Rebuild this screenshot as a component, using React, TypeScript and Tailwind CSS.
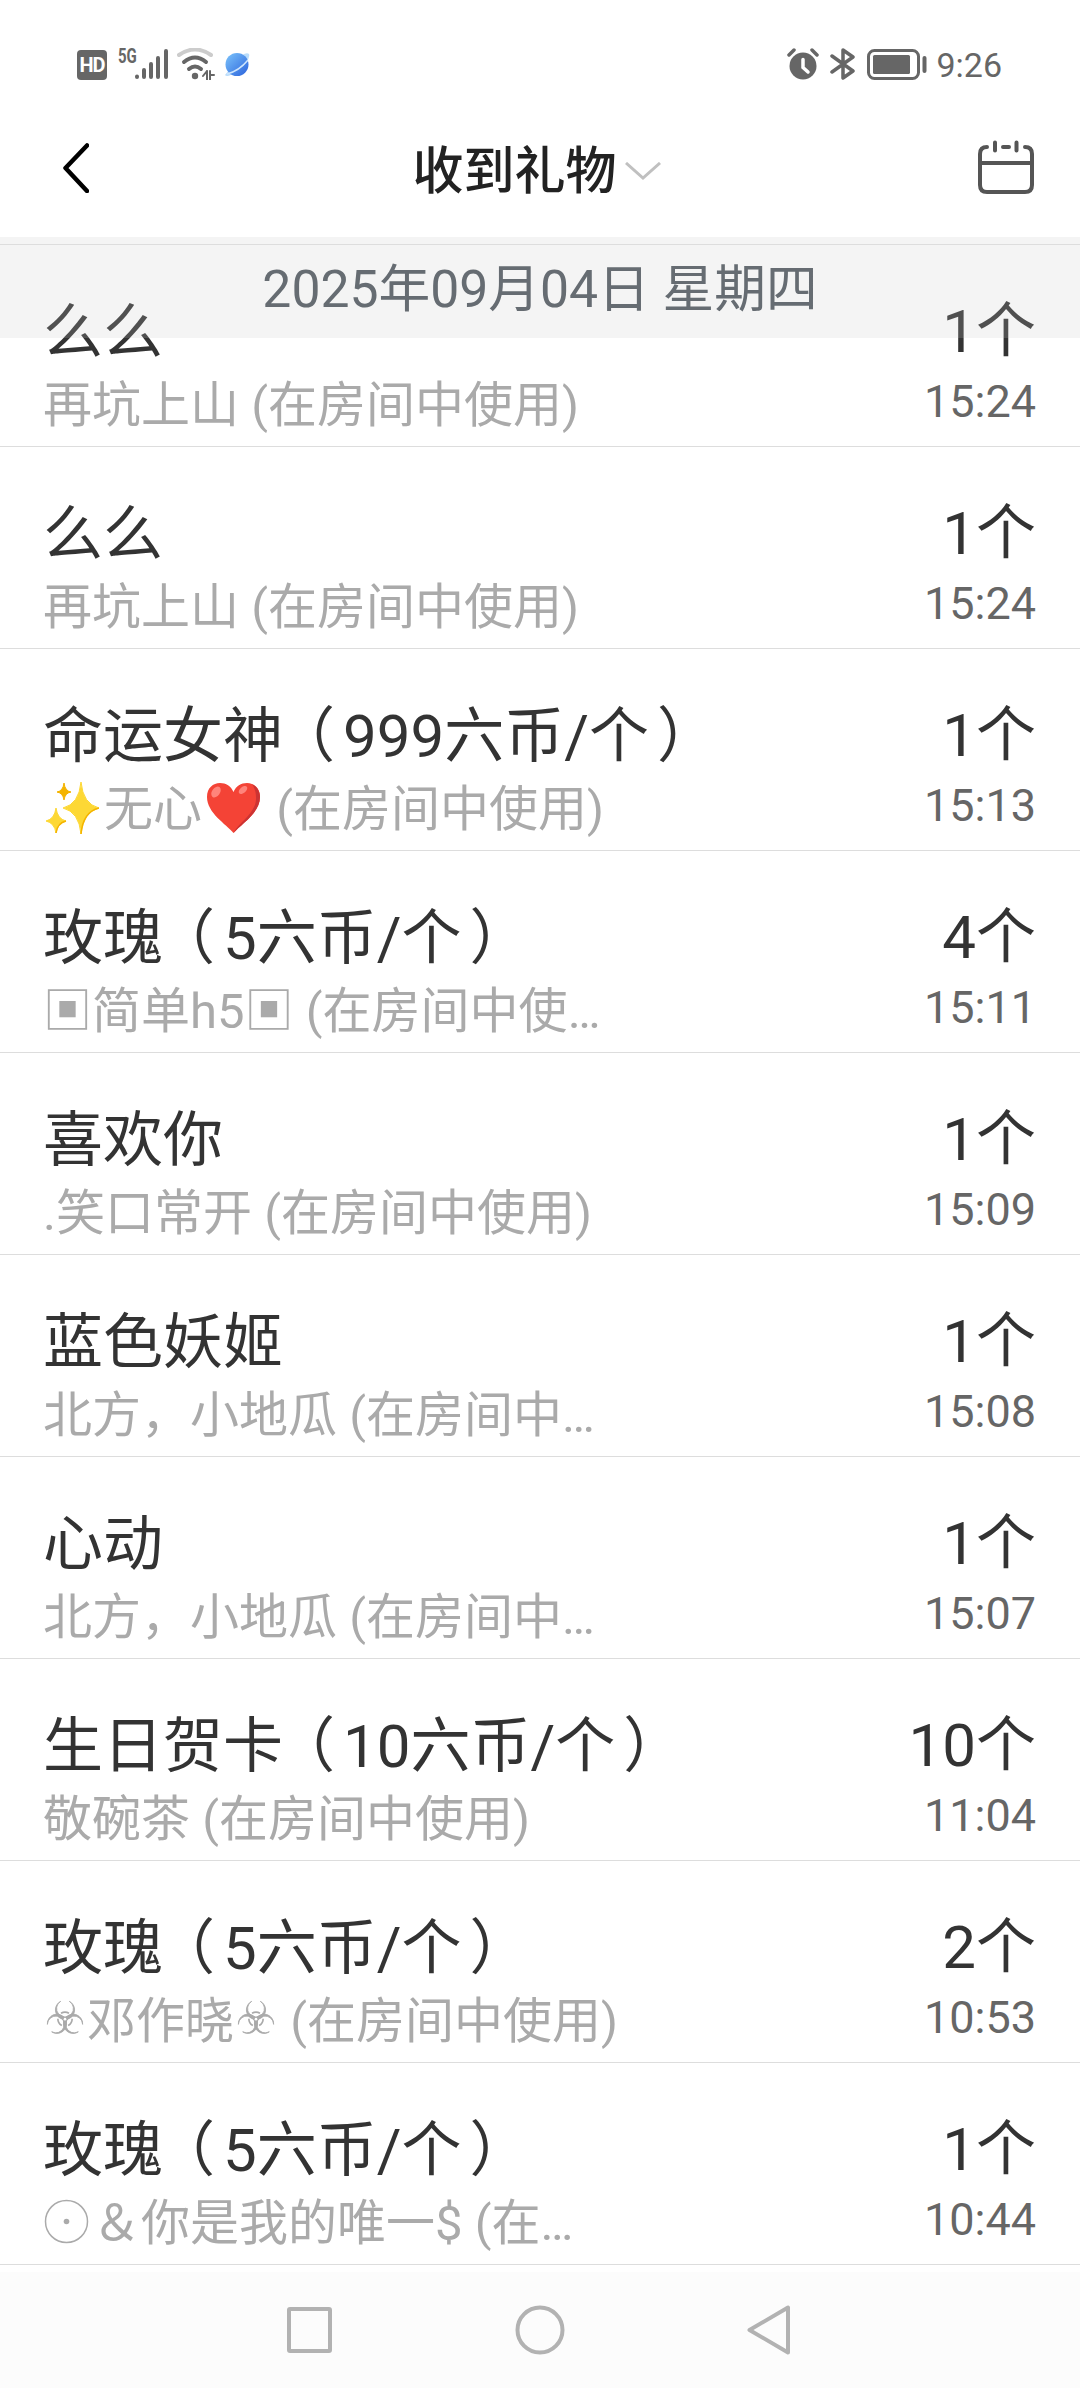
import clsx from "clsx";

interface Gift {
  name: string;
  price?: string;
  sender: string;
  count: string;
  time: string;
}

const gifts: Gift[] = [
  { name: "么么", sender: "再坑上山 (在房间中使用)", count: "1个", time: "15:24" },
  { name: "么么", sender: "再坑上山 (在房间中使用)", count: "1个", time: "15:24" },
  { name: "命运女神", price: "999六币/个", sender: "✨无心❤ (在房间中使用)", count: "1个", time: "15:13" },
  { name: "玫瑰", price: "5六币/个", sender: "▣简单h5▣ (在房间中使…", count: "4个", time: "15:11" },
  { name: "喜欢你", sender: ".笑口常开 (在房间中使用)", count: "1个", time: "15:09" },
  { name: "蓝色妖姬", sender: "北方，小地瓜 (在房间中…", count: "1个", time: "15:08" },
  { name: "心动", sender: "北方，小地瓜 (在房间中…", count: "1个", time: "15:07" },
  { name: "生日贺卡", price: "10六币/个", sender: "敬碗茶 (在房间中使用)", count: "10个", time: "11:04" },
  { name: "玫瑰", price: "5六币/个", sender: "☣邓作晓☣ (在房间中使用)", count: "2个", time: "10:53" },
  { name: "玫瑰", price: "5六币/个", sender: "⊙＆你是我的唯一$ (在…", count: "1个", time: "10:44" },
];

const Sparkles = () => (
  <svg className="inline-block w-[54px] h-[52px] ml-[2px] mr-[5px] -mt-[10px]" viewBox="0 0 54 52">
    <g fill="#fdd835">
      <path d="M36 0 Q38 22 54 26 Q38 30 36 52 Q34 30 18 26 Q34 22 36 0Z" stroke="#fdd835" strokeLinejoin="round" />
      <path d="M11 26 Q12.500 37 21 39 Q12.500 41 11 51 Q9.500 41 1 39 Q9.500 37 11 26Z" stroke="#fdd835" />
    </g>
    <path fill="none" stroke="#f4b400" strokeWidth="1.500" d="M54 26 Q38 30 36 52M21 39 Q12.500 41 11 51" />
    <path fill="#f4b400" stroke="#f4b400" d="M19 1 Q20 9 26 10 Q20 11 19 18 Q18 11 12 10 Q18 9 19 1Z" />
  </svg>
);

const Heart = () => (
  <svg className="inline-block w-[55px] h-[52px] ml-[4px] mr-[3px] -mt-[10px]" viewBox="0 0 55 52">
    <path
      fill="#f44336"
      d="M27.500 51 C20 42 1 31 1 15 C1 6 7 1 14 1 C20 1 25 4 27.500 10 C30 4 35 1 41 1 C48 1 54 6 54 15 C54 31 35 42 27.500 51Z"
    />
    <path fill="#c33" d="M46 2 C51 5 54 9 54 15 C54 31 35 42 27.500 51 C33 40 51 31 50 15 C50 9 48 5 46 2Z" />
    <ellipse cx="10" cy="10" rx="4" ry="6" fill="#ff847b" transform="rotate(35 10 10)" />
    <ellipse cx="37" cy="8" rx="3" ry="5" fill="#ff847b" transform="rotate(50 37 8)" />
  </svg>
);

const Biohazard = () => (
  <svg className="inline-block w-[40px] h-[37px] ml-[2px] mr-[2px] -mt-[13px]" viewBox="45 60 120 112" fill="#aaa">
    {[0, 120, 240].map((angle) => (
      <g key={angle} transform={`rotate(${angle} 105 118)`} stroke="#aaa">
        <path d="M92 64 A29 29 0 1 0 118 64 A25.500 25.500 0 1 1 92 64Z" strokeWidth="2.500" />
        <path d="M93 100 Q105 93 117 100" fill="none" strokeWidth="5" />
        <path d="M105 115 V134" strokeWidth="8" />
      </g>
    ))}
    <circle cx="105" cy="118" r="4" fill="#fff" />
  </svg>
);

const CircledDot = () => (
  <svg className="inline-block w-[45px] h-[45px] ml-px mr-[3px] -mt-[11px]" viewBox="0 0 45 45">
    <circle cx="22.500" cy="22.500" r="21" fill="none" stroke="#aaa" strokeWidth="1.500" />
    <circle cx="22.500" cy="22.500" r="2.800" fill="#aaa" />
  </svg>
);

const renderSender = (sender: string) =>
  Array.from(sender).map((char, index) => {
    if (char === "✨") return <Sparkles key={index} />;
    if (char === "❤") return <Heart key={index} />;
    if (char === "☣") return <Biohazard key={index} />;
    if (char === "⊙") return <CircledDot key={index} />;
    return char;
  });

const StatusBar = () => (
  <div className="h-[120px] flex items-start justify-between pl-[77px] pr-[78px] text-[#666]">
    <div className="flex h-8 mt-12">
      <div className="w-[30px] h-[30px] mt-[2px] rounded-[4px] bg-[#666] text-white text-[20px] leading-[30px] font-bold text-center tracking-tighter">
        HD
      </div>
      <span className="ml-[11px] w-[17px] text-[20px] leading-[16px] font-bold origin-left scale-x-75">5G</span>
      <svg className="w-[34px] h-8" viewBox="0 0 34 32" stroke="#666" strokeWidth="4" strokeLinecap="round">
        <path d="M2 29v-.5M9 29v-7M16 29v-13M23 29V10M31 29V3" />
      </svg>
      <svg className="w-[40px] h-8 ml-[8px]" viewBox="0 0 40 32" fill="none" strokeWidth="4" strokeLinecap="round">
        <path d="M2 7 Q18 -4 34 7" stroke="#ccc" />
        <path d="M7 14 Q18 5 29 14M12 21 Q18 16 24 21" stroke="#666" />
        <circle cx="18" cy="28" r="3.200" fill="#666" />
        <path d="M30 23v9M26 28l4-5M33 23v9M33 27h4" stroke="#666" strokeWidth="2" />
      </svg>
      <svg className="w-[26px] h-[26px] mt-1 ml-[7px]" viewBox="0 0 26 26">
        <defs>
          <linearGradient id="planet" x1="0" y1="0" x2="1" y2="1">
            <stop offset="0" stopColor="#7cc4fb" />
            <stop offset="1" stopColor="#2a62dc" />
          </linearGradient>
        </defs>
        <path d="M1 23 Q3 26 12 20 Q27 8 25 2 Q23 0 18 3Z" fill="#b9dcfb" />
        <circle cx="13" cy="12.500" r="11.500" fill="url(#planet)" />
        <path d="M3 22 Q15 19 24 8" fill="none" stroke="#cfe6fd" strokeWidth="1.500" />
      </svg>
    </div>

    <div className="flex h-8 mt-12">
      <svg className="w-[32px] h-8" viewBox="0 0 32 32" fill="none" strokeLinecap="round">
        <circle cx="16" cy="18" r="13.500" fill="#666" />
        <path d="M2 7l5-5M30 7l-5-5" stroke="#666" strokeWidth="3.500" />
        <path d="M16 11.500v8l5 4.500" stroke="#fff" strokeWidth="3.500" />
      </svg>
      <svg
        className="w-[26px] h-8 ml-[11px]"
        viewBox="0 0 26 32"
        fill="none"
        stroke="#666"
        strokeWidth="3.500"
        strokeLinejoin="round"
        strokeLinecap="round"
      >
        <path d="M2 8 L23 23 L13 30 V2 L23 9 L2 24" />
      </svg>
      <svg className="w-[60px] h-8 ml-[11px]" viewBox="0 0 60 32">
        <rect x="1.500" y="2.500" width="50" height="28" rx="6" fill="none" stroke="#666" strokeWidth="3" />
        <rect x="6" y="7" width="37" height="19" rx="1.500" fill="#666" />
        <path d="M57.500 10v13" stroke="#666" strokeWidth="4" strokeLinecap="round" />
      </svg>
      <span className="ml-[9px] text-[34px] leading-[34px]">9:26</span>
    </div>
  </div>
);

const Header = () => (
  <div className="h-[117px] flex justify-between pl-[63px] pr-[46px]">
    <svg
      className="w-[26px] h-[50px] mt-[23px] mr-[6px]"
      viewBox="0 0 26 50"
      fill="none"
      stroke="#000"
      strokeWidth="4.500"
      strokeLinecap="round"
      strokeLinejoin="round"
    >
      <path d="M24 2.500 L2.500 25 L24 48" />
    </svg>
    <div className="flex">
      <h1 className="text-[51px] leading-[60px] mt-[22px] font-medium text-[#222]">收到礼物</h1>
      <svg className="w-9 h-[18px] mt-[42px] ml-[8px]" viewBox="0 0 36 18" fill="none" stroke="#c0c0c0" strokeWidth="3">
        <path d="M1 1 L18 16 L35 1" />
      </svg>
    </div>
    <svg
      className="w-[56px] h-[54px] mt-[20px]"
      viewBox="0 0 56 54"
      fill="none"
      stroke="#555"
      strokeWidth="4"
      strokeLinecap="round"
    >
      <path d="M9 7 Q2 7 2 14 V45 Q2 52 9 52 H47 Q54 52 54 45 V14 Q54 7 47 7M25 7h6M2 23H54" />
      <path d="M17 2.500v8M38.500 2.500v8" />
    </svg>
  </div>
);

const GiftRow = ({ gift, first }: { gift: Gift; first: boolean }) => (
  <div
    className={clsx(
      "h-[202px] flex justify-between pl-[43px] pr-11 border-b border-[#ddd] whitespace-nowrap",
      first && "mt-[-93px]"
    )}
  >
    <div className="pt-[52px]">
      <div className="text-[60px] leading-[72px] text-[#333]">
        {gift.name}
        {gift.price && (
          <>
            <span className="ml-[22px] mr-2 [font-feature-settings:'halt']">（</span>
            {gift.price}
            <span className="ml-2 [font-feature-settings:'halt']">）</span>
          </>
        )}
      </div>
      <div className="mt-1 h-[66px] text-[49px] leading-[66px] text-[#aaa]">{renderSender(gift.sender)}</div>
    </div>
    <div className="pt-[51px] text-right">
      <div className="text-[60px] leading-[72px] text-[#333]">{gift.count}</div>
      <div className="mt-px text-[45px] leading-[66px] text-[#666]">{gift.time}</div>
    </div>
  </div>
);

const NavBar = () => (
  <div className="h-[116px] mt-[7px] bg-[#fcfcfc]">
    <div className="flex pt-[33px] pl-[285px]">
      <svg className="w-[50px] h-[50px]" viewBox="0 0 50 50" fill="none" stroke="#b2b2b2" strokeWidth="4">
        <rect x="4" y="4" width="41" height="42" rx="1" />
      </svg>
      <svg className="w-[50px] h-[50px] ml-[180px]" viewBox="0 0 50 50" fill="none" stroke="#b2b2b2" strokeWidth="4">
        <circle cx="25" cy="25" r="22.500" />
      </svg>
      <svg
        className="w-[44px] h-[50px] ml-[182px]"
        viewBox="0 0 44 50"
        fill="none"
        stroke="#b2b2b2"
        strokeWidth="4"
        strokeLinejoin="round"
      >
        <path d="M2.500 25 L41 2.500 V47.500Z" />
      </svg>
    </div>
  </div>
);

export default function App() {
  return (
    <div className="w-[1080px] h-[2388px] overflow-hidden bg-white font-[Roboto,'Noto_Sans_CJK_SC',sans-serif]">
      <StatusBar />
      <Header />
      <div className="h-[8px] bg-[#f4f4f4] border-b border-[#ddd]" />
      {/* translucent date bar floating over the scrolled list */}
      <div className="relative z-10 h-[93px] bg-[#c8c8c8]/20 text-center text-[51.700px] leading-[90px] text-[#666c72]">
        2025年09月04日 星期四
      </div>
      {gifts.map((gift, index) => (
        <GiftRow key={index} gift={gift} first={index === 0} />
      ))}
      <NavBar />
    </div>
  );
}
